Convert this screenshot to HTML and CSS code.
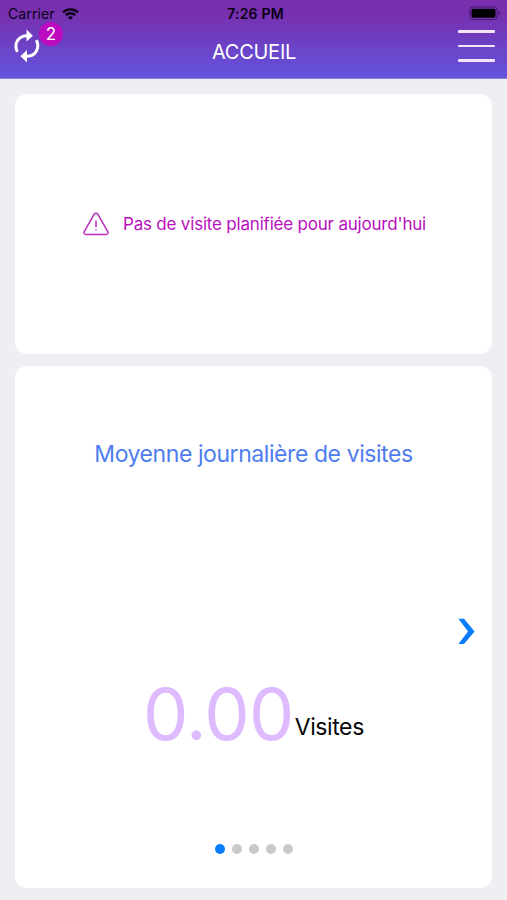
FILE: index.html
```html
<!DOCTYPE html>
<html lang="fr">
<head>
<meta charset="utf-8">
<title>Accueil</title>
<link rel="stylesheet" href="styles.css">
</head>
<body>
<header class="header">
  <div class="status">
    <div class="network">
      <span class="carrier">Carrier</span>
      <svg class="wifi" width="17" height="12" viewBox="0 0 17 12" fill="none" stroke="#090016" stroke-width="2.3"><path d="M1 4.4C5 .4 12 .4 16 4.4M3.7 7.1c2.7-2.5 6.9-2.5 9.6 0"/><path d="M8.5 11.8 5.9 9.2c1.5-1.4 3.7-1.4 5.2 0z" fill="#090016" stroke="none"/></svg>
    </div>
    <span class="time">7:26 PM</span>
    <svg class="battery" width="32" height="15" viewBox="0 0 32 15"><rect x=".8" y="1" width="27.4" height="12.6" rx="3.4" fill="none" stroke="#451567" stroke-width="1"/><rect x="2.5" y="2.8" width="24" height="9" rx="1.8"/><path d="M29.8 5.3c1.6.8 1.6 3.2 0 4z" fill="#451567"/></svg>
  </div>
  <nav class="bar">
    <div class="sync">
      <svg width="28" height="36" viewBox="0 0 28 36"><g fill="none" stroke="#fff" stroke-width="3"><path d="M4.3 24.8C.5 17 5 8.7 14.4 8.7"/><path d="M23.4 13.2C27.2 21 22.7 29.3 13.4 29.3"/></g><path d="M13.5 2.5 19.9 8.7 13.5 14.4zM14 23.1 7.4 29.3 14 35.5z" fill="#fff"/></svg>
      <span class="badge">2</span>
    </div>
    <h1 class="title">ACCUEIL</h1>
    <div class="menu"><i></i><i></i><i></i></div>
  </nav>
</header>
<main class="content">
  <section class="card notice">
    <svg width="26" height="24" viewBox="0 0 26 24" fill="none" stroke="#b92abd" stroke-linecap="round" stroke-linejoin="round"><path stroke-width="1.5" d="M11.2 2.2 1.4 19.3C.5 20.9 1.4 22.5 3.2 22.5h19.6c1.8 0 2.7-1.6 1.8-3.2L14.8 2.2c-.8-1.4-2.8-1.4-3.6 0z"/><path stroke-width="1.5" d="M13 9v5.8M13 17.7v.1"/></svg>
    <span class="notice-text">Pas de visite planifiée pour aujourd'hui</span>
  </section>
  <section class="card stats">
    <h2 class="stats-title">Moyenne journalière de visites</h2>
    <div class="next"><svg width="18" height="27" viewBox="0 0 18 27"><path d="M.4.8H6L16.6 13.5 6 26H.4L10 13.5z" fill="#087cfa"/></svg></div>
    <div class="value"><span class="number">0.00</span><span class="unit">Visites</span></div>
    <div class="dots"><i class="active"></i><i></i><i></i><i></i><i></i></div>
  </section>
</main>
</body>
</html>
```
FILE: styles.css
```css
* { box-sizing: border-box; }
body {
  margin: 0;
  height: 900px;
  overflow: hidden;
  background: #eeeef3;
  font-family: Inter, "Liberation Sans", sans-serif;
}
.header {
  height: 79px;
  background: linear-gradient(#782fae 0, #782fae 15%, #6351d9 94%, #6553d8);
  border-bottom: 1px solid #8d80dc;
}
.status {
  height: 27px;
  display: grid;
  grid-template-columns: 1fr auto 1fr;
  align-items: center;
  padding: 0 6px 0 8px;
  color: #090016;
  font-size: 14px;
}
.network { display: flex; align-items: center; gap: 7px; }
.carrier { letter-spacing: 0.1px; }
.time { padding-left: 2px; font-weight: 600; letter-spacing: 0.2px; }
.battery { justify-self: end; }
.bar {
  height: 51px;
  display: grid;
  grid-template-columns: 1fr auto 1fr;
  align-items: start;
  padding: 0 12px 0 13px;
}
.sync { position: relative; width: 28px; height: 36px; }
.badge {
  position: absolute;
  left: 26px;
  top: -5px;
  width: 24px;
  height: 24px;
  border-radius: 50%;
  background: #bd09bf;
  color: #fff;
  font-size: 17px;
  line-height: 24px;
  text-align: center;
}
.title {
  margin: 13px 0 0;
  color: #fff;
  font-size: 20px;
  font-weight: 400;
  line-height: 24px;
  letter-spacing: -0.25px;
}
.menu {
  justify-self: end;
  width: 37px;
  margin-top: 3px;
  display: grid;
  gap: 12px;
}
.menu i { height: 2.7px; border-radius: 1px; background: #f2e6fc; }
.content {
  display: flex;
  flex-direction: column;
  gap: 12px;
  padding: 15px 15px 0;
}
.card { border-radius: 12px; background: #fff; }
.notice {
  height: 260px;
  display: flex;
  align-items: center;
  justify-content: center;
  gap: 14px;
  padding-left: 2px;
}
.notice-text {
  color: #b90fbd;
  font-size: 17px;
  letter-spacing: -0.2px;
  white-space: nowrap;
}
.stats {
  height: 522px;
  padding-top: 73px;
  display: flex;
  flex-direction: column;
  align-items: center;
}
.stats-title {
  margin: 0;
  color: #4e7df0;
  font-size: 23px;
  font-weight: 400;
  line-height: 30px;
  letter-spacing: -0.43px;
  white-space: nowrap;
}
.next { align-self: flex-end; height: 27px; margin: 149px 16px 0 0; }
.value {
  display: flex;
  align-items: flex-start;
  margin-top: 24px;
  height: 90px;
}
.number {
  color: #debaff;
  font-size: 72px;
  font-weight: 400;
  line-height: 90px;
  letter-spacing: -0.7px;
}
.unit {
  margin: 43px 0 0 1px;
  color: #080808;
  font-size: 23px;
  line-height: 30px;
  letter-spacing: -0.4px;
}
.dots { display: flex; gap: 7px; margin-top: 85px; }
.dots i { width: 10px; height: 10px; border-radius: 50%; background: #c9c9c9; }
.dots .active { background: #087cfa; }
```
